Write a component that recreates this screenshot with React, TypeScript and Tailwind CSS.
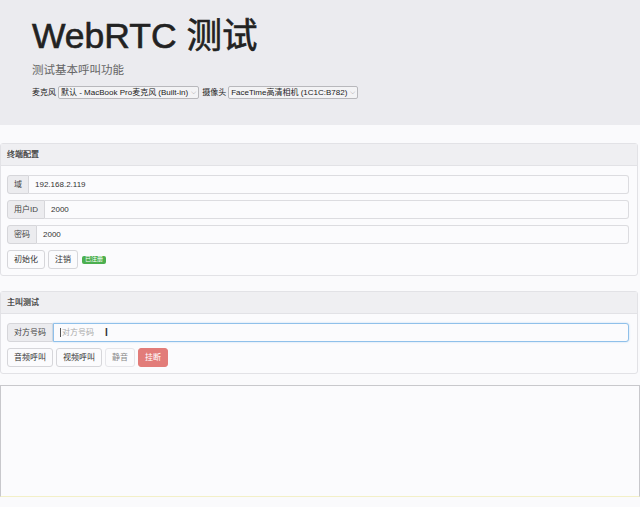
import React from "react";

const font = { fontFamily: '"Liberation Sans", "Noto Sans CJK SC", sans-serif' };

// input group: addon on the left, text field on the right
function Field({ label, value, placeholder, focus }: { label: string; value?: string; placeholder?: string; focus?: boolean }) {
  return (
    <div className="flex h-[19px] w-full">
      <span className="flex items-center px-[6px] text-[8px] text-[#444] bg-[#ececef] border border-[#d6d6da] rounded-l-[3px]">
        {label}
      </span>
      <div
        className={`flex-1 flex items-center px-[6px] text-[8px] bg-[#fbfbfd] rounded-r-[3px] border ${
          focus ? "border-[#8fc0ea] shadow-[0_0_2px_#b6d6f2]" : "border-[#dcdce0] border-l-0"
        }`}
      >
        {focus && <span className="w-px h-[9px] bg-[#555] mr-px"></span>}
        {value ? <span className="text-[#333]">{value}</span> : <span className="text-[#aaa]">{placeholder}</span>}
        {focus && <span className="ml-[11px] text-[#333] text-[10px] leading-none font-bold">I</span>}
      </div>
    </div>
  );
}

function Btn({ children, kind }: { children: React.ReactNode; kind?: "danger" | "disabled" }) {
  const cls =
    kind === "danger"
      ? "bg-[#e27c79] border-[#e27c79] text-white"
      : kind === "disabled"
      ? "bg-[#fbfbfd] border-[#e6e6ea] text-[#888]"
      : "bg-[#fbfbfd] border-[#d6d6da] text-[#333]";
  return (
    <button className={`h-[19px] px-[6px] text-[8px] border rounded-[3px] flex items-center ${cls}`}>{children}</button>
  );
}

function Panel({ title, children }: { title: string; children: React.ReactNode }) {
  return (
    <div className="mr-[2px] border border-[#e2e2e6] rounded-[3px] bg-[#fbfbfd]">
      <div className="h-[22px] flex items-center px-[6px] bg-[#efeff2] border-b border-[#e2e2e6] text-[8px] text-[#333] [-webkit-text-stroke:0.2px_#333]">
        {title}
      </div>
      <div className="px-[6px] pt-[9px] pb-[6px] flex flex-col gap-[6px] pr-[8px]">{children}</div>
    </div>
  );
}

export default function App() {
  return (
    <div className="w-[640px] h-[507px] bg-[#fafafc] overflow-hidden" style={font}>
      {/* header */}
      <div className="h-[125px] bg-[#ebebef] px-[32px] pt-[16px]">
        <h1 className="text-[35.5px] leading-[40px] text-[#222] [-webkit-text-stroke:0.6px_#222]">WebRTC 测试</h1>
        <p className="mt-[7px] text-[11.5px] leading-[14px] text-[#666]">测试基本呼叫功能</p>
        <div className="mt-[9px] flex items-center gap-[2px] text-[8px] text-[#222]">
          <span>麦克风</span>
          <span className="h-[13px] flex items-center gap-[3px] px-[2px] border border-[#b8b8bc] rounded-[2px] bg-[#f3f3f5]">
            默认 - MacBook Pro麦克风 (Built-in)
            <span className="text-[7px] text-[#555]">⌵</span>
          </span>
          <span className="ml-[1px]">摄像头</span>
          <span className="h-[13px] flex items-center gap-[3px] px-[2px] border border-[#b8b8bc] rounded-[2px] bg-[#f3f3f5]">
            FaceTime高清相机 (1C1C:B782)
            <span className="text-[7px] text-[#555]">⌵</span>
          </span>
        </div>
      </div>

      <div className="mt-[18px]">
        <Panel title="终端配置">
          <Field label="域" value="192.168.2.119" />
          <Field label="用户ID" value="2000" />
          <Field label="密码" value="2000" />
          <div className="flex items-center gap-[3px]">
            <Btn>初始化</Btn>
            <Btn>注销</Btn>
            <span className="ml-[1px] h-[8px] px-[3px] flex items-center text-[6px] text-white bg-[#4caf50] rounded-[2px]">
              已注册
            </span>
          </div>
        </Panel>
      </div>

      <div className="mt-[15px]">
        <Panel title="主叫测试">
          <Field label="对方号码" placeholder="对方号码" focus />
          <div className="flex items-center gap-[3px]">
            <Btn>音频呼叫</Btn>
            <Btn>视频呼叫</Btn>
            <Btn kind="disabled">静音</Btn>
            <Btn kind="danger">挂断</Btn>
          </div>
        </Panel>
      </div>

      {/* video area */}
      <div className="mt-[11px] h-[112px] border border-[#c8c8cc] border-b-[#f3f0c8] bg-[#fbfbfd]"></div>
    </div>
  );
}
